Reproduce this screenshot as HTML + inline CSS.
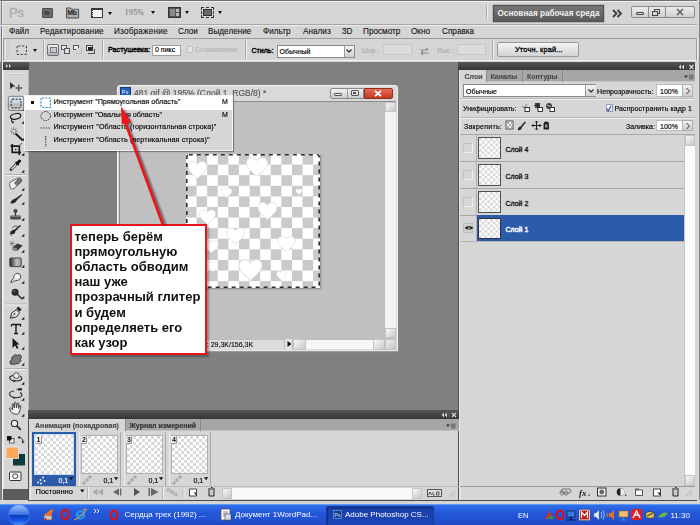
<!DOCTYPE html>
<html><head><meta charset="utf-8">
<style>
*{margin:0;padding:0;box-sizing:border-box}
html,body{width:700px;height:525px;overflow:hidden;background:#808080;font-family:"Liberation Sans",sans-serif;color:#000}
.a{position:absolute}
.t{position:absolute;white-space:nowrap;line-height:1}
svg{position:absolute;overflow:visible}
.m{font-size:8.2px;top:27.5px;color:#111;-webkit-text-stroke:0.1px #111}
.s7{font-size:7px;-webkit-text-stroke:0.15px currentColor}
.b{font-weight:bold}
.arr{position:absolute;width:0;height:0;border-left:2.5px solid transparent;border-right:2.5px solid transparent;border-top:3px solid #111}
.sep{position:absolute;width:1px;background:#a9a9a9;border-right:1px solid #f2f2f2;box-sizing:content-box}
.inp{position:absolute;background:#fff;border:1px solid #a0a0a0}
.ti{position:absolute}
.thumb{border:1.5px solid #3c3c3c;background:conic-gradient(#fff 25%,#dadada 0 50%,#fff 0 75%,#dadada 0) 0 0/7px 7px}.lt{background-size:5.5px 5.5px;border:1.5px solid #505050}
.lbl{width:6px;height:8px;background:#f2f2f2;border-right:1px solid #999;border-bottom:1px solid #999;font-size:7px;font-weight:bold;line-height:8px;padding-left:1px;color:#111}
</style></head><body><div id="root" style="position:absolute;left:0;top:0;width:700px;height:525px;filter:blur(0.3px)">

<!-- ============ TOP APP BAR ============ -->
<div class="a" style="left:0;top:0;width:700px;height:62px;background:#d5d5d5"></div>
<div class="a" style="left:0;top:0;width:700px;height:1px;background:#707070"></div>
<div class="a" style="left:0;top:1px;width:700px;height:1px;background:#f0f0f0"></div>
<div class="a" style="left:1px;top:0;width:1px;height:504px;background:#7a7a7a"></div>
<div class="a" style="left:2px;top:1px;width:1px;height:503px;background:#ededed"></div>
<div class="a" style="left:0;top:24px;width:700px;height:1px;background:#a5a5a5"></div>
<div class="a" style="left:0;top:25px;width:700px;height:1px;background:#ededed"></div>
<div class="a" style="left:697px;top:0;width:3px;height:504px;background:#d5d5d5"></div>
<div class="a" style="left:699px;top:0;width:1px;height:504px;background:#8a8a8a"></div>

<!-- Ps logo -->
<div class="t" style="left:9px;top:5.6px;font-size:13px;color:#acacac;letter-spacing:-0.2px;-webkit-text-stroke:0.3px #acacac">Ps</div>
<!-- Br -->
<div class="a" style="left:42px;top:7.5px;width:11px;height:10px;background:#6d6d6d;border:1px solid #4a4a4a;border-radius:1px"></div>
<div class="t b" style="left:44.5px;top:10.5px;font-size:5px;color:#2a2a2a">Br</div>
<!-- Mb -->
<svg style="left:66px;top:6.5px" width="14" height="12"><path d="M0.6 1 H4.5 L5.5 2.3 H12.6 V11 H0.6Z" fill="#b0b0b0" stroke="#4a4a4a" stroke-width="1"/><path d="M1.5 3.2 H11.8" stroke="#ddd" stroke-width="0.6"/></svg>
<div class="t b" style="left:67.6px;top:9.6px;font-size:6.6px;color:#1a1a1a;letter-spacing:-0.3px">Mb</div>
<!-- view extras -->
<div class="a" style="left:91px;top:7.5px;width:12px;height:10.5px;background:#f2f2f2;border:1px solid #3a3a3a;border-top:2.5px solid #3a3a3a;border-left:2.5px solid #3a3a3a"></div><div class="a" style="left:91.8px;top:11px;width:1px;height:6px;background:repeating-linear-gradient(#ddd 0 1px,transparent 1px 2px)"></div>
<div class="arr" style="left:107.5px;top:11.5px;border-left-width:2px;border-right-width:2px"></div>
<!-- 195% -->
<div class="t" style="left:124.5px;top:9px;font-size:8.4px;color:#6e6e6e;font-family:'Liberation Serif',serif">195%</div>
<div class="arr" style="left:150.5px;top:11px"></div>
<!-- arrange -->
<div class="a" style="left:168px;top:7px;width:12.5px;height:10.5px;background:#555;border:1px solid #333"></div>
<div class="a" style="left:169.5px;top:8.5px;width:5px;height:7.5px;background:#8a8a8a"></div>
<div class="a" style="left:175.5px;top:8.5px;width:3.5px;height:3px;background:#bbb"></div>
<div class="a" style="left:175.5px;top:12.5px;width:3.5px;height:3.5px;background:#bbb"></div>
<div class="arr" style="left:185px;top:11px"></div>
<!-- screen mode -->
<div class="a" style="left:201px;top:7px;width:12.5px;height:10.5px;border:1px dashed #333"></div>
<div class="a" style="left:203px;top:9px;width:8.5px;height:6.5px;background:#6a6a6a;border:1px solid #333"></div>
<div class="arr" style="left:218px;top:11px"></div>

<!-- workspace switcher -->
<div class="sep" style="left:486px;top:5px;height:14px"></div>
<div class="a" style="left:493px;top:4.5px;width:111px;height:17px;background:linear-gradient(#767676,#5a5a5a);border:1px solid #505050;box-shadow:0 0 0 0.5px #9a9a9a"></div>
<div class="t b" style="left:497.5px;top:9.6px;font-size:8.2px;color:#f0f0f0">Основная рабочая среда</div>
<svg style="left:611.5px;top:9px" width="12" height="9"><path d="M1 1 L4.5 4.5 L1 8 M5.5 1 L9 4.5 L5.5 8" stroke="#3a3a3a" stroke-width="1.8" fill="none"/></svg>
<!-- window buttons -->
<div class="a" style="left:631px;top:5.5px;width:63.5px;height:12.5px;background:linear-gradient(#ececec,#cfcfcf);border:1px solid #8a8a8a;border-radius:2px"></div>
<div class="a" style="left:647.5px;top:6px;width:1px;height:11.5px;background:#8a8a8a"></div>
<div class="a" style="left:664.5px;top:6px;width:1px;height:11.5px;background:#8a8a8a"></div>
<div class="a" style="left:636px;top:11.5px;width:8px;height:3px;border:1px solid #444;border-radius:1px"></div>
<div class="a" style="left:654px;top:8.5px;width:6px;height:5px;border:1px solid #444"></div>
<div class="a" style="left:652px;top:10.5px;width:6px;height:5px;border:1px solid #444;background:#dcdcdc"></div>
<svg style="left:676px;top:8px" width="8" height="8"><path d="M1 1 L7 7 M7 1 L1 7" stroke="#555" stroke-width="1.3"/></svg>

<!-- ============ MENU ============ -->
<div class="t m" style="left:9px">Файл</div>
<div class="t m" style="left:40px;letter-spacing:0.1px">Редактирование</div>
<div class="t m" style="left:114px;letter-spacing:0.2px">Изображение</div>
<div class="t m" style="left:178px">Слои</div>
<div class="t m" style="left:208px">Выделение</div>
<div class="t m" style="left:263px">Фильтр</div>
<div class="t m" style="left:303px">Анализ</div>
<div class="t m" style="left:342px">3D</div>
<div class="t m" style="left:363px">Просмотр</div>
<div class="t m" style="left:411px">Окно</div>
<div class="t m" style="left:442px">Справка</div>

<!-- ============ OPTIONS BAR ============ -->
<div class="a" style="left:3px;top:38px;width:694px;height:23px;border:1px solid #9a9a9a;border-bottom-color:#f0f0f0"></div><div class="a" style="left:697px;top:38px;width:1px;height:23px;background:#f0f0f0"></div>
<div class="a" style="left:5px;top:40px;width:4px;height:19px;background:#d0d0d0;border-left:1px solid #e6e6e6"></div>
<svg style="left:15.5px;top:44.5px" width="12" height="11"><rect x="1" y="1" width="9.5" height="8.5" rx="1.2" fill="none" stroke="#444" stroke-width="1.1" stroke-dasharray="2.2 1.6"/></svg>
<div class="arr" style="left:32.5px;top:49px"></div>
<div class="sep" style="left:43px;top:40px;height:19px"></div>
<div class="a" style="left:47px;top:44px;width:12px;height:11.5px;background:linear-gradient(#eef2f6,#a8b0b8);border:1px solid #707070;border-radius:2px"></div>
<div class="a" style="left:49.5px;top:47px;width:7px;height:6px;background:#c8c8c8;border:1px solid #777"></div>
<div class="a" style="left:61px;top:45px;width:6px;height:5px;background:#eee;border:1px solid #555"></div>
<div class="a" style="left:63.5px;top:48px;width:6px;height:6px;background:#ddd;border:1px solid #555"></div>
<div class="a" style="left:73px;top:45px;width:6px;height:5px;border:1px solid #555;background:#eee"></div>
<div class="a" style="left:75.5px;top:48px;width:6px;height:6px;background:#d5d5d5;border-right:1px solid #bbb;border-bottom:1px solid #bbb"></div>
<div class="a" style="left:85.5px;top:45px;width:7px;height:6px;border:1px solid #444;background:#eee"></div>
<div class="a" style="left:87.5px;top:47px;width:4px;height:3px;background:#222"></div>
<div class="a" style="left:88px;top:49px;width:6.5px;height:5px;border-right:1px solid #555;border-bottom:1px solid #555"></div>
<div class="sep" style="left:102px;top:40px;height:19px"></div>
<div class="t" style="left:108px;top:46.3px;font-size:7.3px;-webkit-text-stroke:0.4px #000;letter-spacing:-0.05px">Растушевка:</div>
<div class="inp" style="left:151.5px;top:44.5px;width:29px;height:11.5px"></div>
<div class="t s7" style="left:155px;top:46.3px">0 пикс</div>
<div class="a" style="left:187px;top:45.5px;width:6px;height:7px;border:1px solid #c4c4c4;background:#e4e4e4"></div>
<div class="t s7" style="left:195px;top:46.3px;color:#b5b5b5">Сглаживание</div>
<div class="sep" style="left:245px;top:40px;height:19px"></div>
<div class="t" style="left:251.5px;top:47.3px;font-size:7px;letter-spacing:0;-webkit-text-stroke:0.4px #000">Стиль:</div>
<div class="inp" style="left:277px;top:45px;width:77.5px;height:12.5px;border-color:#8a8a8a"></div>
<div class="t s7" style="left:279.5px;top:48px">Обычный</div>
<div class="a" style="left:343.5px;top:45.5px;width:10.5px;height:11.5px;background:linear-gradient(#f4f4f4,#cfcfcf);border-left:1px solid #999"></div>
<svg style="left:346px;top:49px" width="6" height="4"><path d="M0.5 0.5 L3 3 L5.5 0.5" stroke="#334" stroke-width="1.3" fill="none"/></svg>
<div class="t s7" style="left:361.5px;top:46.5px;color:#b0b0b0">Шир.:</div>
<div class="inp" style="left:383px;top:44.3px;width:29px;height:11px;border-color:#c8c8c8;background:#dcdcdc"></div>
<svg style="left:420px;top:46.5px" width="9" height="9"><path d="M0.5 3 H8 M6 1 L8 3 M8.5 6 H1 M3 4 L1 6 M3 8 L1 6" stroke="#8a8a8a" stroke-width="1.1" fill="none"/></svg>
<div class="t s7" style="left:437px;top:46.5px;color:#b0b0b0">Выс.:</div>
<div class="inp" style="left:456.5px;top:44.3px;width:29.5px;height:11px;border-color:#c8c8c8;background:#dcdcdc"></div>
<div class="sep" style="left:492px;top:40px;height:19px"></div>
<div class="a" style="left:497px;top:42px;width:82px;height:15px;background:linear-gradient(#f5f5f5,#d3d3d3);border:1px solid #9a9a9a;border-radius:2px"></div>
<div class="t s7" style="left:515px;top:46px;font-size:7.4px;letter-spacing:0.15px;-webkit-text-stroke:0.3px #000">Уточн. край...</div>

<!-- ============ TOOLBAR ============ -->
<div class="a" style="left:3px;top:62px;width:26px;height:427px;background:#d5d5d5;border-left:1px solid #ececec;border-right:1px solid #b8b8b8"></div>
<div class="a" style="left:3px;top:62px;width:26px;height:8px;background:linear-gradient(#585858,#383838)"></div>
<svg style="left:6px;top:64px" width="6" height="4"><path d="M0 0 L2 2 L0 4 Z M3 0 L5 2 L3 4 Z" fill="#ddd"/></svg>
<div class="a" style="left:3px;top:489px;width:26px;height:11px;background:#5c5c5c"></div>
<div class="a" style="left:6px;top:72.5px;width:20px;height:2.5px;background:#c4c4c4;border-top:1px solid #eaeaea"></div>
<!-- tool icons -->
<svg style="left:0;top:0" width="30" height="490">
 <g fill="#1e1e1e" stroke="none">
  <!-- small triangles -->
  <path d="M21.3 110.8 L24.3 107.8 L24.3 110.8Z M21.3 123.8 L24.3 120.8 L24.3 123.8Z M21.3 140.8 L24.3 137.8 L24.3 140.8Z M21.3 155.8 L24.3 152.8 L24.3 155.8Z M21.3 172.8 L24.3 169.8 L24.3 172.8Z M21.3 190.8 L24.3 187.8 L24.3 190.8Z M21.3 204.8 L24.3 201.8 L24.3 204.8Z M21.3 220.8 L24.3 217.8 L24.3 220.8Z M21.3 236.8 L24.3 233.8 L24.3 236.8Z M21.3 252.8 L24.3 249.8 L24.3 252.8Z M21.3 267.8 L24.3 264.8 L24.3 267.8Z M21.3 283.8 L24.3 280.8 L24.3 283.8Z M21.3 298.8 L24.3 295.8 L24.3 298.8Z M21.3 319.8 L24.3 316.8 L24.3 319.8Z M21.3 334.8 L24.3 331.8 L24.3 334.8Z M21.3 349.8 L24.3 346.8 L24.3 349.8Z M21.3 365.8 L24.3 362.8 L24.3 365.8Z M21.3 384.8 L24.3 381.8 L24.3 384.8Z M21.3 400.8 L24.3 397.8 L24.3 400.8Z M21.3 416.8 L24.3 413.8 L24.3 416.8Z"/>
 </g>
 <!-- separators -->
 <path d="M5 174.5 H27 M5 304 H27 M5 368.5 H27" stroke="#b0b0b0" stroke-width="1"/>
 <path d="M5 175.5 H27 M5 305 H27 M5 369.5 H27" stroke="#f0f0f0" stroke-width="1"/>
 <!-- move tool -->
 <path d="M9.9 82 L15.3 86.4 L12.6 86.8 L10.4 89.2 Z" fill="#2a2a2a"/>
 <path d="M18.8 85 V91 M15.8 88 H21.8" stroke="#333" stroke-width="1" fill="none"/><path d="M17.8 85.6 L18.8 84.6 L19.8 85.6Z M17.8 90.4 L18.8 91.4 L19.8 90.4Z M16.4 87 L15.4 88 L16.4 89Z M21.2 87 L22.2 88 L21.2 89Z" fill="#333"/>
 <!-- selected marquee button -->
 <defs><linearGradient id="selb" x1="0" x2="0" y1="0" y2="1"><stop offset="0" stop-color="#e4ecf3"/><stop offset="0.45" stop-color="#cdd6de"/><stop offset="0.55" stop-color="#b4b8bc"/><stop offset="1" stop-color="#d2d4d6"/></linearGradient></defs>
 <rect x="8.3" y="96.3" width="15.4" height="14.2" rx="1.8" fill="url(#selb)" stroke="#6f747a" stroke-width="0.9"/>
 <rect x="11.3" y="99.3" width="9.6" height="8.4" rx="1" fill="none" stroke="#555" stroke-width="1.4" stroke-dasharray="2 1.3"/>
 <!-- lasso -->
 <ellipse cx="15.6" cy="116.4" rx="5.2" ry="2.7" transform="rotate(-12 15.6 116.4)" fill="none" stroke="#222" stroke-width="1.25"/>
 <path d="M12 118.8 Q11 121 12.5 122.5 Q13.5 123 13.5 121.5" fill="none" stroke="#222" stroke-width="1.1"/>
 <!-- magic wand -->
 <path d="M15.5 133.5 L22.3 140" stroke="#1a1a1a" stroke-width="2"/>
 <path d="M13.8 127.3 V130 M13.8 132.5 V135 M10.2 131.2 H12.5 M15 131.2 H17.5 M11.2 128.6 L12.6 130 M15 132.4 L16.4 133.8 M16.4 128.6 L15 130 M12.6 132.4 L11.2 133.8" stroke="#555" stroke-width="0.8"/>
 <!-- crop -->
 <path d="M12.2 144 V152.3 H21 M10.5 146.2 H19.3 V155" fill="none" stroke="#1a1a1a" stroke-width="1.7"/>
 <path d="M19.5 145.5 L22 143" stroke="#333" stroke-width="0.8"/><circle cx="15.7" cy="149.3" r="0.9" fill="#333"/>
 <!-- eyedropper -->
 <path d="M11 169.5 L16.8 163.8" stroke="#333" stroke-width="2.8" stroke-linecap="round"/>
 <path d="M11.6 169 L16.3 164.3" stroke="#f4f4f4" stroke-width="1.2"/>
 <path d="M17.3 163.3 L19.6 161" stroke="#111" stroke-width="3" stroke-linecap="round"/>
 <path d="M15.6 161.8 L19 165.2" stroke="#111" stroke-width="1.2"/>
 <!-- healing -->
 <path d="M9.8 185.5 Q9 183.5 10.5 182 L17.5 178.3 Q19.5 177.3 21 178.8 Q22.3 180.3 21.2 182 L14 188.5 Q12 190 10.5 188.3Z" fill="#f2f2f2" stroke="#555" stroke-width="0.9"/>
 <path d="M14 183 L18.6 178 Q20 177.3 21.2 178.8 Q22.3 180.3 21.2 182 L16.8 186.3Z" fill="#6a6a6a"/><path d="M16 184 h0.8 M17.5 182.5 h0.8 M19 181 h0.8" stroke="#bbb" stroke-width="0.8"/>
 <!-- brush -->
 <path d="M10.3 203.3 Q11.5 199.3 15 198.8 L21.8 194 L22.4 194.8 L16.6 200.6 Q15.8 204 10.3 203.3Z" fill="#2a2a2a"/>
 <!-- stamp -->
 <circle cx="15.5" cy="211" r="1.7" fill="#444" stroke="#333" stroke-width="0.6"/><path d="M15.5 212.6 V215.8" stroke="#333" stroke-width="1.3"/>
 <rect x="10.2" y="215.6" width="10.6" height="4" rx="1" fill="#4a4a4a"/><path d="M10.5 216.5 H20.5" stroke="#999" stroke-width="0.6"/>
 <!-- history brush -->
 <path d="M10 234 Q12 229 14 230 L20 225 L21 226 L15.5 231 Q15 235 10 234Z" fill="#222"/>
 <path d="M12 228 Q16 224 19 228 M11 231 Q9 234 12 236" fill="none" stroke="#555" stroke-width="0.9"/>
 <!-- eraser -->
 <path d="M12.5 247 L17.5 243.5 L22.8 245.5 L17 251 L12.5 250Z" fill="#3c3c3c"/>
 <path d="M12.5 247 L17 248.3 L17 251 L12.5 250Z" fill="#8a8a8a"/>
 <path d="M9.5 243.5 H15 M12 241 V246 M10.3 241.5 L13.8 245.5 M13.8 241.5 L10.3 245.5" stroke="#777" stroke-width="0.7"/>
 <!-- gradient -->
 <defs><linearGradient id="gr" x1="0" x2="1" y1="0" y2="0"><stop offset="0" stop-color="#2a2a2a"/><stop offset="0.6" stop-color="#bdbdbd"/><stop offset="1" stop-color="#9a9a9a"/></linearGradient></defs>
 <rect x="9.8" y="258" width="11.4" height="8.6" rx="0.8" fill="url(#gr)" stroke="#3a3a3a" stroke-width="0.9"/>
 <!-- blur -->
 <path d="M10.8 282.8 Q11 279.5 13.6 278.6 Q13.2 274 17.3 273.2 Q21 273.4 20.8 277 Q20.4 280.4 15.8 280.6 Q13.5 281.2 10.8 282.8Z" fill="#e8e8e8" stroke="#444" stroke-width="0.9"/>
 <circle cx="17.6" cy="276.2" r="1.5" fill="#fff"/>
 <!-- dodge -->
 <circle cx="15.1" cy="292.3" r="3.5" fill="#2a2a2a"/><circle cx="14.2" cy="291.3" r="1.1" fill="#666"/>
 <path d="M17.5 294.6 L22.4 299.3" stroke="#222" stroke-width="1.4"/>
 <!-- pen -->
 <path d="M10.3 318.2 L11.8 312.8 L16.3 309.8 L19.5 313 L16.3 317 Z" fill="#e8e8e8" stroke="#333" stroke-width="1"/>
 <path d="M16.2 308.6 L18.5 306.5 L21.6 309.6 L19.5 311.8Z" fill="#2a2a2a"/>
 <path d="M10.5 318 L14.2 314.3" stroke="#444" stroke-width="0.7"/><circle cx="14.6" cy="313.8" r="0.9" fill="#444"/>
 <!-- type -->
 <path d="M11.5 324.5 H20.5 V326.5 M11.5 324.5 V326.5 M16 324.5 V333.5 M14 333.5 H18" fill="none" stroke="#1a1a1a" stroke-width="1.4"/>
 <!-- path select -->
 <path d="M12.5 338 L12.5 348 L15 345.5 L17 349 L18.5 348 L16.5 344.5 L19.5 344.5Z" fill="#1a1a1a"/>
 <!-- shape -->
 <path d="M10 363.5 Q9.5 360.5 12 359.5 Q11 356.5 13.5 356 Q15 353.5 17 355.5 Q19.5 354 21 355.5 Q22.5 357.5 20.3 359 Q22 361.5 19.5 362.3 Q18.5 364.8 16 363.5 Q14.5 365.5 12.8 364 Q11 365 10 363.5Z" fill="#7a7a7a" stroke="#333" stroke-width="0.9"/>
 <!-- 3d rotate -->
 <circle cx="16.3" cy="375.6" r="2.9" fill="#e6e6e6" stroke="#444" stroke-width="0.9"/>
 <path d="M13 375.5 Q9 376.5 9.8 378.5 Q11 381 16 381 Q21.5 380.8 21.8 378.6 Q22 377.3 20 376.3" fill="none" stroke="#2a2a2a" stroke-width="1.1"/>
 <path d="M13.5 379.5 L15.5 381 L13.5 382.5Z" fill="#222"/>
 <!-- 3d camera -->
 <path d="M14 391 Q9.5 391.5 9.5 394 Q10 397.5 16 397.8 Q21.8 397.5 22 395 Q22 393.5 20 392.5" fill="none" stroke="#2a2a2a" stroke-width="1.1"/>
 <path d="M13.5 396.3 L15.5 397.8 L13.5 399.3Z" fill="#222"/>
 <rect x="17.8" y="388.2" width="4.2" height="2.3" fill="#2a2a2a"/><path d="M16.5 388.6 L17.8 389.3 L16.5 390" fill="#2a2a2a"/>
 <!-- hand -->
 <path d="M12.8 413.5 Q10.5 411 9.6 409 Q9.3 407.6 10.6 408 L12.6 409.8 L12.2 404.3 Q12.6 403.2 13.5 404 L14.3 408 L14.5 402.6 Q15.3 401.8 16 402.6 L16.4 407.8 L17.4 403.3 Q18.2 402.6 18.8 403.5 L18.4 408.5 L19.8 405.5 Q20.7 405.2 21 406 L19.8 411 Q19 413.8 17 414.4 Z" fill="#f4f4f4" stroke="#2a2a2a" stroke-width="0.85" stroke-linejoin="round"/>
 <!-- zoom -->
 <circle cx="14.5" cy="423.4" r="3.1" fill="#f2f2f2" stroke="#2a2a2a" stroke-width="1.1"/>
 <path d="M16.8 425.8 L20.8 429.8" stroke="#222" stroke-width="1.7"/>
 <!-- small swatches -->
 <rect x="9.5" y="438.5" width="4.5" height="4.5" fill="#fff" stroke="#222" stroke-width="0.7"/>
 <rect x="7" y="436" width="4.5" height="4.5" fill="#111"/>
 <path d="M18.5 437.5 Q22.5 437 23 441.5" fill="none" stroke="#222" stroke-width="1"/><path d="M17.5 437.5 L19.5 435.8 L19.8 439Z M21.3 441.5 L24.6 441.2 L23 443.5Z" fill="#222"/>
 <!-- fg/bg -->
 <rect x="13" y="454" width="12" height="11.5" fill="#0e3a3f"/>
 <rect x="6" y="447" width="12.5" height="11.5" fill="#fba85a" stroke="#ececec" stroke-width="0.8"/>
 <!-- quick mask -->
 <rect x="9.5" y="472" width="11.5" height="8.5" rx="0.8" fill="#f5f5f5" stroke="#333" stroke-width="1"/>
 <ellipse cx="15.2" cy="476.2" rx="2.6" ry="2.3" fill="none" stroke="#333" stroke-width="0.9"/>
</svg>

<!-- ============ DOCUMENT WINDOW ============ -->
<div class="a" style="left:116.5px;top:85px;width:281.5px;height:267px;background:#d9d9d9;border:1px solid #efefef;border-radius:3px 3px 0 0;box-shadow:0 0 0 0.5px #8a8a8a"></div>
<div class="a" style="left:119px;top:101px;width:277px;height:248.5px;background:#c0c0c0;border-top:1px solid #8c8c8c;border-left:1px solid #8c8c8c"></div>
<!-- PS icon -->
<div class="a" style="left:120px;top:87px;width:10.5px;height:10px;background:#2a62b4;border:1px solid #173e7a"></div><div class="t b" style="left:121.8px;top:89.5px;font-size:5.5px;color:#bcd8ff">Ps</div>
<div class="t" style="left:134px;top:89px;font-size:8.5px;color:#555;-webkit-text-stroke:0.15px #555">481.gif @ 195% (Слой 1, RGB/8) *</div>
<!-- window buttons -->
<div class="a" style="left:330px;top:87.5px;width:34px;height:11px;background:linear-gradient(#f2f2f2,#cbcbcb);border:1px solid #8a8a8a;border-radius:2px 0 0 2px"></div>
<div class="a" style="left:346.5px;top:88px;width:1px;height:10px;background:#999"></div>
<div class="a" style="left:334px;top:93px;width:7.5px;height:2.5px;border:1px solid #555;border-radius:1px;background:#f5f5f5"></div>
<div class="a" style="left:350.5px;top:89.5px;width:8px;height:6px;border:1px solid #555;border-radius:1px"></div>
<div class="a" style="left:353px;top:91.5px;width:3px;height:2px;background:#555"></div>
<div class="a" style="left:364px;top:87.5px;width:29px;height:11px;background:linear-gradient(#e86a55,#c23a22);border:1px solid #8a3020;border-radius:0 2px 2px 0"></div>
<svg style="left:374px;top:89.5px" width="8" height="7"><path d="M1 0.8 L7 6.2 M7 0.8 L1 6.2" stroke="#fff" stroke-width="1.8"/></svg>
<!-- scrollbars -->
<div class="a" style="left:385px;top:102px;width:10.5px;height:236px;background:#f4f4f4"></div>
<div class="a" style="left:385px;top:102px;width:10.5px;height:10px;background:linear-gradient(135deg,#f7f7f7,#c9c9c9);border:1px solid #c4c4c4"></div>
<div class="a" style="left:385px;top:327.5px;width:10.5px;height:10.5px;background:linear-gradient(135deg,#f7f7f7,#c9c9c9);border:1px solid #c4c4c4"></div>
<div class="a" style="left:119px;top:338.5px;width:277px;height:11px;background:#dcdcdc;border-top:1px solid #bdbdbd"></div>
<div class="t" style="left:195px;top:340.8px;font-size:7px;color:#111;-webkit-text-stroke:0.15px #111">Док: 29,3K/156,3K</div>
<div class="a" style="left:284px;top:339px;width:9px;height:10.5px;background:#e6e6e6;border-left:1px solid #bbb;border-right:1px solid #bbb"></div>
<svg style="left:286.5px;top:341.3px" width="5" height="6"><path d="M0.5 0 L4.5 3 L0.5 6Z" fill="#111"/></svg>
<div class="a" style="left:293px;top:339px;width:13px;height:10.5px;background:linear-gradient(135deg,#f7f7f7,#c9c9c9);border:1px solid #c4c4c4"></div>
<div class="a" style="left:306px;top:339.5px;width:67px;height:9.5px;background:#f6f6f6"></div>
<div class="a" style="left:373px;top:339px;width:11.5px;height:10.5px;background:linear-gradient(135deg,#f7f7f7,#c9c9c9);border:1px solid #c4c4c4"></div>
<div class="a" style="left:385px;top:338.5px;width:10.5px;height:11px;background:linear-gradient(135deg,#eee,#c6c6c6);border:1px solid #c0c0c0"></div>
<div class="a" style="left:116.5px;top:350px;width:281.5px;height:2px;background:#e8e8e8;border-bottom:1px solid #9a9a9a"></div>

<!-- canvas -->
<div class="a" style="left:185.5px;top:153.5px;width:134px;height:134px;background:conic-gradient(#cacaca 25%,#fff 0 50%,#cacaca 0 75%,#fff 0) 0 0/21.2px 21.2px;box-shadow:1px 1px 1.5px rgba(0,0,0,0.3)"></div>
<svg style="left:185.5px;top:153.5px" width="134" height="134">
 <defs><path id="h" d="M0 7.5 C-5 3.5 -9 0 -9 -3.5 C-9 -6.8 -6.8 -8.5 -4.5 -8.5 C-2.3 -8.5 -0.8 -7.3 0 -5.8 C0.8 -7.3 2.3 -8.5 4.5 -8.5 C6.8 -8.5 9 -6.8 9 -3.5 C9 0 5 3.5 0 7.5Z"/>
 <filter id="bl" x="-20%" y="-20%" width="140%" height="140%"><feGaussianBlur stdDeviation="0.75"/></filter></defs>
 <g fill="#fff" stroke="#dedede" stroke-width="0.8" filter="url(#bl)">
  <use href="#h" transform="translate(11.5 16.5) scale(1.05)"/>
  <use href="#h" transform="translate(71 13.5) scale(1.17)"/>
  <use href="#h" transform="translate(40.5 39) scale(0.6)"/>
  <use href="#h" transform="translate(113 38) scale(0.35)"/>
  <use href="#h" transform="translate(81.5 57.5) scale(1.05)"/>
  <use href="#h" transform="translate(21.5 63.5) scale(0.9)"/>
  <use href="#h" transform="translate(49.5 82.5) scale(1.0)"/>
  <use href="#h" transform="translate(100.5 90.5) scale(0.95)"/>
  <use href="#h" transform="translate(64.5 116.5) scale(1.28)"/>
  <use href="#h" transform="translate(95.5 122) scale(0.55)"/>
  <use href="#h" transform="translate(25.5 93) scale(0.75)"/>
  <use href="#h" transform="translate(26.5 113) scale(0.6)"/>
 </g>
 <rect x="0.8" y="0.8" width="132.4" height="132.4" rx="2" fill="none" stroke="#2e2e2e" stroke-width="1.6" stroke-dasharray="4 4"/>
</svg>

<!-- ============ FLYOUT MENU ============ -->
<div class="a" style="left:24px;top:95px;width:209px;height:56px;background:#d6d6d6;border:1px solid #f2f2f2;box-shadow:1px 1px 1px rgba(0,0,0,0.35)"></div>
<div class="a" style="left:25px;top:95.5px;width:207px;height:14px;background:#fff"></div>
<div class="a" style="left:30.8px;top:101px;width:3px;height:3px;background:#111"></div>
<svg style="left:40px;top:97px" width="12" height="52">
 <rect x="1" y="1" width="9.5" height="9.5" rx="1" fill="none" stroke="#2c7bbf" stroke-width="1.1" stroke-dasharray="2 1.3"/>
 <ellipse cx="5.7" cy="19.1" rx="4.8" ry="4.5" fill="none" stroke="#333" stroke-width="1" stroke-dasharray="1.8 1"/>
 <path d="M0.5 31 H11" stroke="#333" stroke-width="1.1" stroke-dasharray="1.4 1.2"/>
 <path d="M5.7 39 V50" stroke="#333" stroke-width="1.1" stroke-dasharray="1.4 1.2"/>
</svg>
<div class="t s7" style="left:53.5px;top:98px;font-size:7.2px">Инструмент "Прямоугольная область"</div>
<div class="t s7" style="left:53.5px;top:110.8px;font-size:7.2px">Инструмент "Овальная область"</div>
<div class="t s7" style="left:53.5px;top:123.3px;font-size:7.2px;letter-spacing:0.1px">Инструмент "Область (горизонтальная строка)"</div>
<div class="t s7" style="left:53.5px;top:135.8px;font-size:7.2px;letter-spacing:0.1px">Инструмент "Область (вертикальная строка)"</div>
<div class="t s7" style="left:222px;top:98px">M</div>
<div class="t s7" style="left:222px;top:110.8px">M</div>

<!-- ============ CALLOUT ============ -->
<div class="a" style="left:69.5px;top:223.5px;width:137px;height:131.5px;background:#fff;border:2px solid #e8161a;box-shadow:2px 2px 2px rgba(0,0,0,0.3)"></div>
<div class="a b" style="left:74.5px;top:229.3px;font-size:13px;line-height:15.05px;color:#111;white-space:nowrap">теперь берём<br>прямоугольную<br>область обводим<br>наш уже<br>прозрачный глитер<br>и будем<br>определяеть его<br>как узор</div>

<!-- arrow -->
<svg style="left:0;top:0" width="700" height="525">
 <defs><filter id="ash" x="-50%" y="-10%" width="200%" height="120%"><feGaussianBlur stdDeviation="1.1"/></filter></defs>
 <g filter="url(#ash)" opacity="0.55"><path d="M165 225 L126 121" stroke="#000" stroke-width="2.8"/><path d="M123.5 108 L124.5 125.5 L133 124Z" fill="#000"/></g>
 <path d="M162.8 224.5 L124.5 120" stroke="#f01418" stroke-width="2.6"/>
 <path d="M121 106.3 L121.8 124.3 L131.2 122.2Z" fill="#f01418"/>
</svg>

<!-- ============ RIGHT PANEL ============ -->
<div class="a" style="left:458px;top:62px;width:239px;height:438px;background:#d6d6d6;border-left:1px solid #505050"></div><div class="a" style="left:459px;top:62px;width:2px;height:438px;background:#e6e6e6"></div>
<div class="a" style="left:458px;top:62px;width:239px;height:8px;background:linear-gradient(#555,#363636)"></div>
<svg style="left:678px;top:63.5px" width="18" height="6"><path d="M3 0.5 L0.8 3 L3 5.5Z M6 0.5 L3.8 3 L6 5.5Z" fill="#ddd"/><path d="M8.5 0.5 V5.5" stroke="#666" stroke-width="0.8"/><path d="M11.5 1 L15.5 5 M15.5 1 L11.5 5" stroke="#ddd" stroke-width="1.1"/></svg>
<div class="a" style="left:460px;top:70px;width:237px;height:12px;background:#a6a6a6;border-bottom:1px solid #c4c4c4"></div>
<div class="a" style="left:460px;top:70px;width:26px;height:12.5px;background:#d6d6d6"></div>
<div class="a" style="left:486px;top:70px;width:1px;height:12px;background:#8a8a8a"></div>
<div class="a" style="left:522px;top:70px;width:1px;height:12px;background:#8a8a8a"></div>
<div class="a" style="left:562px;top:70px;width:1px;height:12px;background:#8a8a8a"></div>
<div class="t s7 b" style="left:464.5px;top:73px;color:#505050">Слои</div>
<div class="t s7 b" style="left:490.5px;top:73px;color:#4a4a4a">Каналы</div>
<div class="t s7 b" style="left:527px;top:73px;color:#4a4a4a">Контуры</div>
<svg style="left:684px;top:73.5px" width="10" height="6"><path d="M0 1.5 L4 1.5 L2 4Z" fill="#333"/><rect x="5" y="0.5" width="4.5" height="5" fill="#777"/></svg>

<div class="inp" style="left:463px;top:84px;width:133px;height:12.5px;border-color:#8a8a8a"></div>
<div class="t s7" style="left:466px;top:87.5px">Обычные</div>
<div class="a" style="left:585px;top:84.5px;width:10.5px;height:11.5px;background:linear-gradient(#f4f4f4,#cfcfcf);border-left:1px solid #999"></div>
<svg style="left:587.5px;top:88.5px" width="6" height="4"><path d="M0.5 0.5 L3 3 L5.5 0.5" stroke="#334" stroke-width="1.3" fill="none"/></svg>
<div class="t s7" style="left:597px;top:87.5px;letter-spacing:0.1px">Непрозрачность:</div>
<div class="inp" style="left:656px;top:84px;width:27px;height:12.5px;border-color:#bdbdbd"></div>
<div class="t s7" style="left:660px;top:87.5px">100%</div>
<div class="a" style="left:682px;top:84px;width:10.5px;height:12.5px;background:linear-gradient(#f0f0f0,#cdcdcd);border:1px solid #b0b0b0"></div>
<svg style="left:685.5px;top:87.5px" width="4" height="6"><path d="M0.5 0 L3.5 3 L0.5 6" stroke="#333" stroke-width="1" fill="none"/></svg>
<div class="a" style="left:460px;top:98px;width:237px;height:1px;background:#b9b9b9;border-bottom:1px solid #efefef;box-sizing:content-box"></div>

<div class="t s7" style="left:463px;top:104.5px">Унифицировать:</div>
<svg style="left:520px;top:101px" width="38" height="12">
 <path d="M2 5 L4 7 L7 3" stroke="#555" stroke-width="0.7" fill="none"/><rect x="5" y="6.5" width="4.5" height="4" fill="#fff" stroke="#222" stroke-width="0.9"/>
 <path d="M15 2 L20 2 L20 7 L15 7Z" fill="#333"/><path d="M14 4 L19 9" stroke="#555" stroke-width="1"/><rect x="18" y="6.5" width="4.5" height="4" fill="#fff" stroke="#222" stroke-width="0.9"/>
 <circle cx="29" cy="5" r="3" fill="#444"/><path d="M27 4 L31 6" stroke="#ddd" stroke-width="0.8"/><rect x="30" y="6.5" width="4.5" height="4" fill="#fff" stroke="#222" stroke-width="0.9"/>
</svg>
<div class="a" style="left:605.5px;top:104.2px;width:7px;height:7.5px;background:linear-gradient(#fff,#e4e4ea);border:1px solid #9a9aae"></div>
<svg style="left:606.3px;top:104.8px" width="6" height="7"><path d="M0.8 3.8 L2.4 5.8 L5.2 0.8" stroke="#2b4ab0" stroke-width="1.1" fill="none"/></svg>
<div class="t s7" style="left:614.5px;top:104.5px;letter-spacing:0.1px">Распространить кадр 1</div>
<div class="a" style="left:460px;top:116.5px;width:237px;height:1px;background:#b9b9b9;border-bottom:1px solid #efefef;box-sizing:content-box"></div>

<div class="t s7" style="left:464px;top:122.5px;letter-spacing:0.25px">Закрепить:</div>
<svg style="left:505px;top:119.5px" width="46" height="12">
 <rect x="1" y="1" width="7" height="8" fill="#f3f3f3" stroke="#444" stroke-width="0.9"/><path d="M2 2 h2 v2 h-2z M4 4 h2 v2 h-2z M6 6 h1.5 v2 h-1.5z M2 6 h2 v2 h-2z M6 2 h1.5 v2 h-1.5z" fill="#aaa"/>
 <path d="M12.8 10.2 Q13.3 6.8 15.6 6.6 L19.8 1.6 L20.8 2.4 L16.8 7.6 Q16.6 10.4 12.8 10.2Z" fill="#222"/>
 <path d="M31.5 1 V10 M27 5.5 H36 M30 2.5 L31.5 1 L33 2.5 M30 8.5 L31.5 10 L33 8.5 M28.5 4 L27 5.5 L28.5 7 M34.5 4 L36 5.5 L34.5 7" stroke="#222" stroke-width="1" fill="none"/>
 <path d="M38.5 9.5 V4.5 Q38.5 1.5 41.2 1.5 Q44 1.5 44 4.5 V9.5Z" fill="#222"/><rect x="40" y="4.5" width="2.5" height="3" fill="#999"/>
</svg>
<div class="t s7" style="left:626px;top:122.5px">Заливка:</div>
<div class="inp" style="left:656px;top:120px;width:27px;height:11px;border-color:#bdbdbd"></div>
<div class="t s7" style="left:660px;top:122.5px">100%</div>
<div class="a" style="left:682px;top:120px;width:10.5px;height:11px;background:linear-gradient(#f0f0f0,#cdcdcd);border:1px solid #b0b0b0"></div>
<svg style="left:685.5px;top:122.5px" width="4" height="6"><path d="M0.5 0 L3.5 3 L0.5 6" stroke="#333" stroke-width="1" fill="none"/></svg>
<div class="a" style="left:460px;top:134px;width:237px;height:1px;background:#a9a9a9"></div>

<!-- layers list -->
<div class="a" style="left:460px;top:135px;width:224px;height:351px;background:#d6d6d6"></div>
<div class="a" style="left:684px;top:135px;width:11px;height:351px;background:#fbfbfb;border-left:1px solid #c6c6c6"></div>
<div class="a" style="left:685px;top:135px;width:10px;height:10.5px;background:linear-gradient(135deg,#f7f7f7,#c8c8c8);border:1px solid #c4c4c4"></div>
<div class="a" style="left:685px;top:474.5px;width:10px;height:11px;background:linear-gradient(135deg,#f7f7f7,#c8c8c8);border:1px solid #c4c4c4"></div>
<div class="a" style="left:695px;top:62px;width:2px;height:438px;background:#d6d6d6"></div>

<div class="a" style="left:460px;top:160.5px;width:224px;height:1px;background:#a5a5a5"></div>
<div class="a" style="left:460px;top:187.5px;width:224px;height:1px;background:#a5a5a5"></div>
<div class="a" style="left:460px;top:214.5px;width:224px;height:1px;background:#a5a5a5"></div>
<div class="a" style="left:476px;top:215px;width:208px;height:26px;background:#2c5ca9"></div>
<div class="a" style="left:460px;top:241px;width:224px;height:1px;background:#b5b5b5"></div>
<div class="a" style="left:475.5px;top:135px;width:1px;height:106px;background:#b0b0b0"></div>

<div class="a" style="left:463px;top:143px;width:10px;height:10px;border:1px solid #c2c2c2;border-right-color:#eee;border-bottom-color:#eee"></div>
<div class="a" style="left:463px;top:170px;width:10px;height:10px;border:1px solid #c2c2c2;border-right-color:#eee;border-bottom-color:#eee"></div>
<div class="a" style="left:463px;top:197px;width:10px;height:10px;border:1px solid #c2c2c2;border-right-color:#eee;border-bottom-color:#eee"></div>
<div class="a" style="left:463px;top:223px;width:10px;height:10px;border:1px solid #bbb;background:#cfcfcf"></div>
<svg style="left:463.5px;top:225px" width="10" height="6"><path d="M0.5 3 Q5 -1 9.5 3 Q5 6 0.5 3Z" fill="#222"/><circle cx="5" cy="3" r="1.3" fill="#888"/></svg>

<div class="a thumb lt" style="left:478px;top:137px;width:22.5px;height:21.5px"></div>
<div class="a thumb lt" style="left:478px;top:164px;width:22.5px;height:21.5px"></div>
<div class="a thumb lt" style="left:478px;top:191px;width:22.5px;height:21.5px"></div>
<div class="a thumb lt" style="left:478px;top:217.5px;width:22.5px;height:21.5px;border-color:#334"></div>
<div class="t" style="left:505.5px;top:145.5px;font-size:7px;color:#111;-webkit-text-stroke:0.3px #111">Слой 4</div>
<div class="t" style="left:505.5px;top:172.5px;font-size:7px;color:#111;-webkit-text-stroke:0.3px #111">Слой 3</div>
<div class="t" style="left:505.5px;top:199.5px;font-size:7px;color:#111;-webkit-text-stroke:0.3px #111">Слой 2</div>
<div class="t" style="left:505.5px;top:225.5px;font-size:7px;color:#fff;-webkit-text-stroke:0.4px #fff">Слой 1</div>

<!-- bottom bar -->
<div class="a" style="left:460px;top:485.5px;width:235px;height:1px;background:#9a9a9a"></div>
<svg style="left:560px;top:485.5px" width="135" height="12">
 <path d="M2 5 a2 2 0 1 0 0.1 0 M6 5 a2 2 0 1 0 0.1 0" stroke="#777" stroke-width="1" fill="none"/>
 <rect x="1" y="3" width="10" height="4" rx="2" fill="none" stroke="#666" stroke-width="0.9"/>
 <text x="19" y="9.5" font-family="Liberation Serif" font-style="italic" font-weight="bold" font-size="9" fill="#222">fx</text><rect x="28.5" y="8.5" width="1.3" height="1.3" fill="#222"/>
 <rect x="37.5" y="2" width="8.5" height="8" fill="#eee" stroke="#333" stroke-width="1"/><circle cx="41.75" cy="6" r="2.4" fill="#666"/>
 <circle cx="60.5" cy="6" r="3.8" fill="#222"/><path d="M60.5 2.2 A3.8 3.8 0 0 1 60.5 9.8 Z" fill="#eee"/><rect x="65" y="8.5" width="1.3" height="1.3" fill="#222"/>
 <path d="M75.5 4 H82.5 V9.5 H75.5Z" fill="#fff" stroke="#444" stroke-width="0.9"/><path d="M75.5 4 V3 H79" stroke="#444" stroke-width="0.9" fill="none"/>
 <rect x="93.5" y="3" width="7" height="7" fill="#fff" stroke="#333" stroke-width="0.9"/><path d="M97.5 7 h2 v2" stroke="#222" stroke-width="1.2" fill="none"/>
 <path d="M112 3 H119 M113 4 V10 H118 V4 M115 1.5 H116.5" stroke="#222" stroke-width="1" fill="#ccc"/>
 <path d="M126 10 L132 4 M129 10 L132 7" stroke="#a8a8a8" stroke-width="0.8"/>
</svg>
<div class="a" style="left:459px;top:500px;width:241px;height:4px;background:#d5d5d5"></div>

<!-- ============ ANIMATION PANEL ============ -->
<div class="a" style="left:28px;top:410px;width:430px;height:90px;background:#d6d6d6;border-left:1.5px solid #505050"></div><div class="a" style="left:29.5px;top:418px;width:1px;height:82px;background:#ececec"></div>
<div class="a" style="left:28.5px;top:410px;width:430.5px;height:8.5px;background:linear-gradient(#565656,#363636)"></div>
<svg style="left:441px;top:411.5px" width="18" height="6"><path d="M3 0.5 L0.8 3 L3 5.5Z M6 0.5 L3.8 3 L6 5.5Z" fill="#ddd"/><path d="M8 0.5 V5.5" stroke="#666" stroke-width="0.8"/><path d="M11 1 L15 5 M15 1 L11 5" stroke="#ddd" stroke-width="1.1"/></svg>
<div class="a" style="left:29.5px;top:418.5px;width:429px;height:12.5px;background:#a6a6a6;border-bottom:1px solid #c0c0c0"></div>
<div class="a" style="left:30px;top:418.5px;width:95px;height:13px;background:#d6d6d6"></div>
<div class="a" style="left:125px;top:418.5px;width:1px;height:12.5px;background:#8a8a8a"></div>
<div class="a" style="left:199.5px;top:418.5px;width:1px;height:12.5px;background:#8a8a8a"></div>
<div class="t s7 b" style="left:35px;top:422px;color:#484848;letter-spacing:0.05px">Анимация (покадровая)</div>
<div class="t s7 b" style="left:129.5px;top:422px;color:#333">Журнал измерений</div>
<svg style="left:446px;top:422.5px" width="10" height="6"><path d="M0 1.5 L4 1.5 L2 4Z" fill="#333"/><rect x="5" y="0.5" width="4.5" height="5" fill="#777"/></svg>

<!-- frames -->
<div class="a" style="left:31.5px;top:431.5px;width:44px;height:54.5px;background:#2c5ca9"></div>
<div class="a thumb" style="left:33.7px;top:434.4px;width:40px;height:40.6px;border:1.2px solid #c9dcf6;background-size:6px 6px"></div>
<div class="a" style="left:78.5px;top:432px;width:42px;height:54px;border-left:1px solid #ededed;border-right:1px solid #a9a9a9"></div>
<div class="a" style="left:123.5px;top:432px;width:42px;height:54px;border-left:1px solid #ededed;border-right:1px solid #a9a9a9"></div>
<div class="a" style="left:168.5px;top:432px;width:42px;height:54px;border-left:1px solid #ededed;border-right:1px solid #a9a9a9"></div>
<div class="a thumb" style="left:80.5px;top:434.5px;width:37.5px;height:39.5px;border:1px solid #b0b0b0;background-size:6px 6px"></div>
<div class="a thumb" style="left:125.5px;top:434.5px;width:37.5px;height:39.5px;border:1px solid #b0b0b0;background-size:6px 6px"></div>
<div class="a thumb" style="left:170.5px;top:434.5px;width:37.5px;height:39.5px;border:1px solid #b0b0b0;background-size:6px 6px"></div>
<div class="a lbl" style="left:35.5px;top:436px">1</div>
<div class="a lbl" style="left:81px;top:436px">2</div>
<div class="a lbl" style="left:126px;top:436px">3</div>
<div class="a lbl" style="left:171px;top:436px">4</div>
<div class="t s7" style="left:58.5px;top:477px;color:#fff">0,1</div>
<div class="t s7" style="left:103.5px;top:477px">0,1</div>
<div class="t s7" style="left:148.5px;top:477px">0,1</div>
<div class="t s7" style="left:193.5px;top:477px">0,1</div>
<svg style="left:0;top:470px" width="220" height="20">
 <path d="M114 7.3 h4.2 l-2.1 3z M159 7.3 h4.2 l-2.1 3z M204 7.3 h4.2 l-2.1 3z" fill="#111"/>
 <path d="M69 7.3 h4.2 l-2.1 3z" fill="#111"/>
 <g fill="#fff"><circle cx="38" cy="12.5" r="0.9"/><circle cx="40.5" cy="10" r="0.9"/><circle cx="43" cy="7.5" r="0.9"/><circle cx="41" cy="13.5" r="0.9"/><circle cx="44.5" cy="11" r="0.9"/></g>
 <g fill="none" stroke="#8a8a8a" stroke-width="0.8"><circle cx="84" cy="13" r="1.2"/><circle cx="87" cy="10" r="1.2"/><circle cx="90" cy="7" r="1.2"/><circle cx="129" cy="13" r="1.2"/><circle cx="132" cy="10" r="1.2"/><circle cx="135" cy="7" r="1.2"/><circle cx="174" cy="13" r="1.2"/><circle cx="177" cy="10" r="1.2"/><circle cx="180" cy="7" r="1.2"/></g>
</svg>
<div class="a" style="left:29.5px;top:486px;width:429px;height:1px;background:#b9b9b9"></div>
<div class="t s7" style="left:35.5px;top:488px;font-size:7.5px">Постоянно</div>
<svg style="left:0;top:486px" width="460" height="14">
 <path d="M80 3.5 h4.5 l-2.25 3z" fill="#111"/>
 <path d="M87.5 1 V13 M162.5 1 V13 M183 1 V13" stroke="#b5b5b5"/>
 <path d="M88.5 1 V13 M163.5 1 V13 M184 1 V13" stroke="#efefef"/>
 <path d="M97.5 2.5 L92.5 6 L97.5 9.5Z M103 2.5 L98 6 L103 9.5Z" fill="#a8a8a8"/>
 <path d="M119 2.5 L113 6 L119 9.5Z" fill="#666"/><rect x="120" y="2.5" width="1.3" height="7" fill="#666"/>
 <path d="M134 2 L140 6 L134 10Z" fill="#555"/>
 <path d="M151 2 L158.5 6 L151 10Z" fill="#666"/><rect x="148.5" y="2" width="1.5" height="8" fill="#666"/>
 <g fill="none" stroke="#9a9a9a" stroke-width="0.9"><circle cx="168.5" cy="4" r="1.4"/><circle cx="172" cy="6" r="1.4"/><circle cx="175.5" cy="8" r="1.4"/></g><path d="M176.5 9 L178 10" stroke="#aaa" stroke-width="0.9"/>
 <path d="M189.5 3 H196.5 V10 H189.5Z" fill="#fff" stroke="#333" stroke-width="0.9"/><path d="M194 7 h1.8 v1.8" stroke="#222" stroke-width="1.1" fill="none"/>
 <path d="M208 3 H215 M209 4 V10 H214 V4 M211 1.5 H212.5" stroke="#222" stroke-width="1" fill="#ccc"/>
</svg>
<div class="a" style="left:222px;top:487.5px;width:10px;height:11px;background:linear-gradient(135deg,#f7f7f7,#c8c8c8);border:1px solid #c4c4c4"></div>
<div class="a" style="left:232px;top:488px;width:180px;height:10.5px;background:#f9f9f9"></div>
<div class="a" style="left:412px;top:487.5px;width:10px;height:11px;background:linear-gradient(135deg,#f7f7f7,#c8c8c8);border:1px solid #c4c4c4"></div>
<div class="a" style="left:426.5px;top:489px;width:15px;height:8px;background:#e0e0e0;border:1px solid #555"></div>
<svg style="left:428px;top:490.5px" width="12" height="5"><path d="M0.5 4 L2 1 L3.5 4 M5 1 V4 H7 M8.5 1 H11 V4 H8.5Z" stroke="#333" stroke-width="0.8" fill="none"/></svg>
<svg style="left:448px;top:490px" width="8" height="8"><path d="M1 7 L7 1 M4 7 L7 4" stroke="#aaa" stroke-width="0.8"/></svg>
<div class="a" style="left:28.5px;top:500px;width:431px;height:4px;background:#d5d5d5"></div>
<div class="a" style="left:0;top:500px;width:700px;height:4px;background:#d5d5d5"></div><div class="a" style="left:28px;top:499.6px;width:669px;height:1.3px;background:#4a4a4a"></div>

<!-- ============ TASKBAR ============ -->
<div class="a" style="left:0;top:504px;width:700px;height:21px;background:linear-gradient(#3a7ef0 0%,#2d6ae6 10%,#2456d8 45%,#2151d0 80%,#1e48c2 100%)"></div>
<div class="a" style="left:0;top:504px;width:700px;height:1px;background:#5d98f6"></div>
<div class="a" style="left:8.5px;top:505px;width:20px;height:20px;border-radius:50%;background:linear-gradient(#9cc0f8 0%,#6a9af0 25%,#3a70e0 48%,#0c3cc0 52%,#1a5ae8 80%,#4a9aff 100%);box-shadow:0 0 1px 0.5px #5a90f0"></div>
<!-- quick launch -->
<svg style="left:42px;top:508px" width="60" height="14">
 <path d="M2 12 L2 7 L6 4 L10 7 L10 12Z" fill="#c8c8c8" stroke="#7a4a3a" stroke-width="0.8"/><path d="M3 8 Q7 1 12 1 Q10 4 9 8Z" fill="#f07020"/><path d="M3.5 10 V12" stroke="#c02020" stroke-width="1.5"/>
 <ellipse cx="23" cy="6.5" rx="3.6" ry="4.6" fill="none" stroke="#e01010" stroke-width="2.2"/>
 <ellipse cx="38.5" cy="7" rx="3.8" ry="3.6" fill="none" stroke="#2a9af0" stroke-width="1.8"/><path d="M35 7 H42" stroke="#2a9af0" stroke-width="1.2"/><path d="M33 11 Q31 13 36 10 Q42 6 44 2 Q45 0 41 2" stroke="#f0b020" stroke-width="1" fill="none"/>
 <path d="M52 1 L54 3 L52 5 M55 1 L57 3 L55 5" stroke="#fff" stroke-width="0.9" fill="none"/>
</svg>
<svg style="left:108px;top:509px" width="12" height="12"><ellipse cx="6" cy="6" rx="3.5" ry="4.3" fill="none" stroke="#e01010" stroke-width="2.2"/></svg>
<div class="t" style="left:124.5px;top:511px;font-size:8px;color:#fff">Сердца трех (1992) ...</div>
<svg style="left:220px;top:508px" width="12" height="13"><rect x="1" y="1" width="9" height="11" fill="#fff" stroke="#556" stroke-width="0.8"/><path d="M3 4 H8 M3 6 H8 M3 8 H8" stroke="#446" stroke-width="0.7"/><rect x="5" y="6" width="6" height="6" fill="#dde" stroke="#445" stroke-width="0.6"/></svg>
<div class="t" style="left:235px;top:511px;font-size:8px;color:#fff">Документ 1WordPad...</div>
<div class="a" style="left:326px;top:505.5px;width:108px;height:20px;background:linear-gradient(#1c3fa8,#1a45b8);border:1px solid #173c9a;border-radius:2px;box-shadow:inset 1px 1px 1px #10307a"></div>
<div class="a" style="left:333px;top:510px;width:9px;height:9px;background:#163a78;border:1px solid #4b8ae0"></div>
<div class="t b" style="left:334.5px;top:512.5px;font-size:5px;color:#9cc6ff">Ps</div>
<div class="t" style="left:345px;top:511px;font-size:8px;color:#fff">Adobe Photoshop CS...</div>
<!-- tray -->
<div class="t" style="left:518px;top:511.5px;font-size:7.5px;color:#fff">EN</div>
<svg style="left:543px;top:507px" width="127" height="16">
 <path d="M2 12 L6.5 4 L11 12Z" fill="#e42a2a"/><path d="M4 12 L8 8 L11 12" fill="#1fa040"/>
 <ellipse cx="17" cy="8" rx="3.3" ry="4.3" fill="none" stroke="#e01010" stroke-width="2.1"/>
 <rect x="24" y="4" width="8" height="6" fill="#3a7ad8" stroke="#0a1e5a" stroke-width="0.8"/><rect x="27" y="10" width="2" height="3" fill="#0a1e5a"/><path d="M23 13 H33" stroke="#0a1e5a"/>
 <rect x="36" y="2.5" width="11" height="11" fill="#fff" stroke="#555" stroke-width="0.6"/><rect x="37" y="3.5" width="9" height="9" fill="#c21818"/><path d="M38.5 11 V5 L41.5 8.5 L44.5 5 V11" stroke="#fff" stroke-width="1.2" fill="none"/>
 <path d="M51 6 H53 L56 3 V13 L53 10 H51Z" fill="#eee" stroke="#777" stroke-width="0.5"/><path d="M58 5 Q60 8 58 11 M60 3.5 Q63 8 60 12.5" stroke="#8cd0ff" stroke-width="0.9" fill="none"/>
 <path d="M66 6 H68 L71 3 V13 L68 10 H66Z" fill="#e87020"/><path d="M63.5 6 L65 8 L63.5 10" stroke="#fa0" stroke-width="0.8" fill="none"/>
 <rect x="76" y="4" width="9" height="6" fill="#f0c070" stroke="#a86020" stroke-width="0.6"/><path d="M80.5 10 V13 M78 13 H83" stroke="#38f" stroke-width="1.2"/>
 <rect x="88" y="2" width="11" height="11" rx="2" fill="#e21f26"/><path d="M90 11 L93.5 4 L97 11 M91.5 8.5 Q94 7 97 9" stroke="#fff" stroke-width="1.3" fill="none"/>
 <ellipse cx="107" cy="8" rx="4.5" ry="3.5" fill="#d8c050" stroke="#333" stroke-width="0.8"/><path d="M104 9 L110 6" stroke="#333" stroke-width="1"/>
 <path d="M115 10 Q119 4 125 6 Q121 12 115 10Z" fill="#6cb44a"/>
</svg>
<div class="t" style="left:670.5px;top:511.5px;font-size:8px;color:#fff">11:30</div>

</div></body></html>
